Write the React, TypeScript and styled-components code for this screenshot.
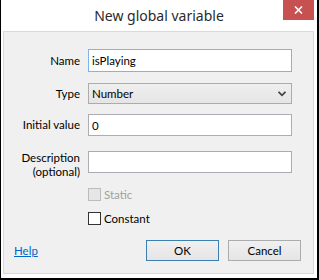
import React from 'react';
import styled, { createGlobalStyle } from 'styled-components';

const GlobalStyle = createGlobalStyle`
  html, body {
    margin: 0;
    padding: 0;
    background: #ffffff;
  }
  body {
    font-family: Lato, 'Noto Sans', sans-serif;
  }
`;

const Window = styled.div`
  box-sizing: border-box;
  width: 319px;
  height: 280px;
  background: #ffffff;
  border-left: 1px solid #000000;
  border-right: 2px solid #000000;
  border-bottom: 2px solid #000000;
  display: flex;
  flex-direction: column;
`;

const TitleBar = styled.div`
  height: 31px;
  display: flex;
  align-items: center;
  justify-content: center;
  position: relative;
  flex-shrink: 0;
`;

const Title = styled.div`
  font-family: 'Noto Sans', sans-serif;
  font-size: 14px;
  color: #2a2a2a;
  margin-top: -1px;
`;

const CloseButton = styled.div`
  position: absolute;
  top: 0;
  right: 3px;
  width: 31px;
  height: 20px;
  background: #c75050;
  display: flex;
  align-items: center;
  justify-content: center;
`;

const Panel = styled.div`
  flex: 1;
  margin: 0 3px 4px 2px;
  border: 1px solid #d9d9d9;
  background: #f0f0f0;
  padding: 17px 21px 12px 0;
  display: flex;
  flex-direction: column;
  font-size: 11.5px;
  color: #000000;
`;

const Fields = styled.div`
  display: grid;
  grid-template-columns: 76px 1fr;
  column-gap: 8px;
  align-items: center;
`;

const Label = styled.div<{ $top?: number; $bottom?: number }>`
  text-align: right;
  line-height: 14px;
  margin-top: ${(p) => p.$top ?? 0}px;
  margin-bottom: ${(p) => p.$bottom ?? 0}px;
`;

const TextBox = styled.input<{ $h: number; $top?: number; $focused?: boolean }>`
  box-sizing: border-box;
  height: ${(p) => p.$h}px;
  margin: ${(p) => p.$top ?? 0}px 0 0 0;
  padding: 0 3px;
  border: 1px solid ${(p) => (p.$focused ? '#7eb4ea' : '#abadb3')};
  background: #ffffff;
  font-family: inherit;
  font-size: 11.5px;
  color: #000000;
  outline: none;
  width: 100%;
`;

const ComboBox = styled.div`
  box-sizing: border-box;
  height: 21px;
  margin-top: 11px;
  border: 1px solid #acacac;
  background: linear-gradient(#efefef, #e5e5e5);
  display: flex;
  align-items: center;
  justify-content: space-between;
  padding: 0 5px 0 3px;
`;

const Checks = styled.div`
  display: flex;
  flex-direction: column;
  gap: 11px;
  margin: 15px 0 0 84px;
`;

const CheckRow = styled.label<{ $disabled?: boolean }>`
  display: flex;
  align-items: center;
  gap: 3px;
  height: 13px;
  color: ${(p) => (p.$disabled ? '#a0a0a0' : '#000000')};
`;

const Box = styled.span<{ $disabled?: boolean }>`
  box-sizing: border-box;
  width: 13px;
  height: 13px;
  border: 1px solid ${(p) => (p.$disabled ? '#bcbcbc' : '#333333')};
  background: ${(p) => (p.$disabled ? '#e6e6e6' : '#ffffff')};
`;

const Footer = styled.div`
  margin-top: auto;
  display: flex;
  align-items: center;
  padding-left: 10px;
  margin-right: -9px;
`;

const HelpLink = styled.a`
  color: #0066cc;
  text-decoration: underline;
  margin-right: auto;
  cursor: pointer;
`;

const Button = styled.button<{ $primary?: boolean }>`
  box-sizing: border-box;
  width: 73px;
  height: 21px;
  margin-left: 9px;
  border: 1px solid ${(p) => (p.$primary ? '#3c7fb1' : '#acacac')};
  background: linear-gradient(#f0f0f0, #e5e5e5);
  font-family: inherit;
  font-size: 11.5px;
  color: #000000;
  padding: 0;
`;

const Chevron = () => (
  <svg width="8" height="6" viewBox="0 0 8 6">
    <path d="M0.5 0.8 L4 4.3 L7.5 0.8" fill="none" stroke="#404040" strokeWidth="1.8" />
  </svg>
);

const CloseIcon = () => (
  <svg width="9" height="8" viewBox="0 0 9 8">
    <path d="M1 0.5 L8 7.5 M8 0.5 L1 7.5" stroke="#ffffff" strokeWidth="1.6" />
  </svg>
);

const App = () => {
  return (
    <Window>
      <GlobalStyle />
      <TitleBar>
        <Title>New global variable</Title>
        <CloseButton>
          <CloseIcon />
        </CloseButton>
      </TitleBar>
      <Panel>
        <Fields>
          <Label>Name</Label>
          <TextBox $h={23} $focused defaultValue="isPlaying" />
          <Label $top={11}>Type</Label>
          <ComboBox>
            <span>Number</span>
            <Chevron />
          </ComboBox>
          <Label $top={10}>Initial value</Label>
          <TextBox $h={22} $top={10} defaultValue="0" />
          <Label $top={15} $bottom={-6}>
            Description
            <br />
            (optional)
          </Label>
          <TextBox $h={22} $top={15} defaultValue="" />
        </Fields>
        <Checks>
          <CheckRow $disabled>
            <Box $disabled />
            Static
          </CheckRow>
          <CheckRow>
            <Box />
            Constant
          </CheckRow>
        </Checks>
        <Footer>
          <HelpLink>Help</HelpLink>
          <Button $primary>OK</Button>
          <Button>Cancel</Button>
        </Footer>
      </Panel>
    </Window>
  );
};

export default App;
